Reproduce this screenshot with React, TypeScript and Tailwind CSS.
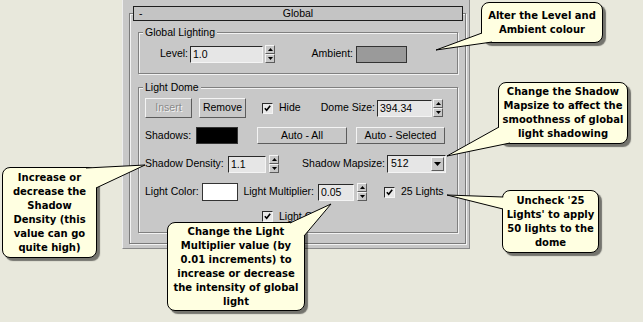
import React from "react"

const raised =
  "bg-[#c8c8c8] border border-t-[#f4f4f4] border-l-[#f4f4f4] border-b-[#5c5c5c] border-r-[#5c5c5c]"
const sunken =
  "border border-t-[#2a2a2a] border-l-[#2a2a2a] border-b-[#f4f4f4] border-r-[#f4f4f4]"

function Spinner() {
  return (
    <div className="flex flex-col w-[10px] h-[18px]">
      <div className={`flex-1 flex items-center justify-center ${raised}`}>
        <svg width="5" height="3" viewBox="0 0 5 3">
          <path d="M2.5 0L5 3H0z" fill="#000" />
        </svg>
      </div>
      <div className={`flex-1 flex items-center justify-center ${raised}`}>
        <svg width="5" height="3" viewBox="0 0 5 3">
          <path d="M0 0H5L2.5 3z" fill="#000" />
        </svg>
      </div>
    </div>
  )
}

function Field({ value, className }: { value: string; className: string }) {
  return (
    <div className={`h-[17px] bg-[#e6e6e6] ${sunken} pl-[2px] leading-[15px] ${className}`}>
      {value}
    </div>
  )
}

function Check() {
  return (
    <div className={`w-[11px] h-[11px] bg-[#e8e8e8] ${sunken} flex items-center justify-center`}>
      <svg width="7" height="7" viewBox="0 0 7 7">
        <path d="M0.8 3.2L2.7 5.3L6.2 0.8" fill="none" stroke="#000" strokeWidth="1.6" />
      </svg>
    </div>
  )
}

function Button({ label, className, disabled }: { label: string; className: string; disabled?: boolean }) {
  return (
    <div
      className={`${raised} flex items-center justify-center ${className} ${
        disabled ? "text-[#8a8a8a] [text-shadow:1px_1px_0_#f4f4f4]" : ""
      }`}
    >
      {label}
    </div>
  )
}

const bubble =
  "absolute flex items-center justify-center text-center rounded-[8px] border border-black bg-[#ffffe1] shadow-[3px_3px_1px_rgba(0,0,0,0.5)] font-['DejaVu_Sans',Verdana,sans-serif] font-bold text-[10px] leading-[14px] whitespace-nowrap"

// pointer wedges: base points sit on the bubble edge, tip on the control
const pointers = [
  { b1: [482, 33], tip: [436, 50], b2: [492, 42] },
  { b1: [499, 127], tip: [447, 156], b2: [510, 143] },
  { b1: [86, 168], tip: [145, 165], b2: [96, 188] },
  { b1: [503, 197], tip: [447, 195], b2: [503, 209] },
  { b1: [290, 223], tip: [331, 204], b2: [304, 236] },
]

export default function App() {
  return (
    <div className="relative w-[643px] h-[322px] overflow-hidden bg-[#e8e8dc] font-['Liberation_Sans',Arial,sans-serif] text-[10.5px] text-black">
      <div className="ml-[122px] w-[348px] h-[249px] bg-[#c8c8c8] border-l border-l-[#eeeeee] border-r border-r-[#8a8a8a] border-b border-b-[#8a8a8a] pt-[13px] pl-[6px]">
        <div className="w-[337px] h-[231px] border border-[#7a7a7a] shadow-[inset_1px_1px_0_#f2f2f2,1px_1px_0_#f2f2f2]">
          {/* rollout title */}
          <div className="-mt-[8px] ml-[3px] w-[330px] h-[15px] bg-[#c4c4c4] border border-[#1e1e1e] grid grid-cols-[24px_1fr_24px] items-center leading-[13px]">
            <span className="pl-[5px]">-</span>
            <span className="text-center">Global</span>
            <span />
          </div>

          {/* Global Lighting */}
          <div className="mt-[11px] ml-[8px] w-[320px] h-[42px] border border-[#808080] shadow-[inset_1px_1px_0_#f2f2f2,1px_1px_0_#f2f2f2]">
            <div className="-mt-[7px] ml-[4px] w-fit h-[13px] leading-[13px] px-[2px] bg-[#c8c8c8]">Global Lighting</div>
            <div className="mt-[6px] h-[18px] flex items-center">
              <span className="w-[49px] text-right">Level:</span>
              <Field value="1.0" className="ml-[2px] w-[73px]" />
              <div className="ml-[2px]">
                <Spinner />
              </div>
              <span className="w-[78px] text-right">Ambient:</span>
              <div className="ml-[3px] w-[51px] h-[17px] bg-[#9a9a9a] border border-[#333333]" />
            </div>
          </div>

          {/* Light Dome */}
          <div className="mt-[13px] ml-[8px] w-[320px] h-[146px] border border-[#808080] shadow-[inset_1px_1px_0_#f2f2f2,1px_1px_0_#f2f2f2] pl-[6px]">
            <div className="-mt-[7px] -ml-[2px] w-fit h-[13px] leading-[13px] px-[2px] bg-[#c8c8c8]">Light Dome</div>

            <div className="mt-[4px] h-[20px] flex items-center">
              <Button label="Insert" disabled className="w-[47px] h-[20px]" />
              <Button label="Remove" className="ml-[7px] w-[47px] h-[20px]" />
              <div className="ml-[16px]">
                <Check />
              </div>
              <span className="ml-[6px] w-[39px]">Hide</span>
              <span className="w-[57px] text-right whitespace-nowrap">Dome Size:</span>
              <Field value="394.34" className="ml-[2px] w-[55px]" />
              <div className="ml-[1px]">
                <Spinner />
              </div>
            </div>

            <div className="mt-[9px] h-[17px] flex items-center">
              <span className="w-[49px]">Shadows:</span>
              <div className="ml-[2px] w-[42px] h-[17px] bg-black border border-[#333333]" />
              <Button label="Auto - All" className="ml-[19px] w-[90px] h-[17px]" />
              <Button label="Auto - Selected" className="ml-[9px] w-[89px] h-[17px]" />
            </div>

            <div className="mt-[11px] h-[18px] flex items-center">
              <span className="w-[81px] whitespace-nowrap">Shadow Density:</span>
              <Field value="1.1" className="ml-[2px] w-[38px]" />
              <div className="ml-[3px]">
                <Spinner />
              </div>
              <span className="w-[108px] pr-[2px] text-right whitespace-nowrap">Shadow Mapsize:</span>
              <div className={`w-[59px] h-[18px] bg-[#e6e6e6] ${sunken} flex items-center`}>
                <span className="flex-1 pl-[3px]">512</span>
                <div className={`w-[13px] h-[14px] mr-[1px] flex items-center justify-center ${raised}`}>
                  <svg width="7" height="4" viewBox="0 0 7 4">
                    <path d="M0 0H7L3.5 4z" fill="#000" />
                  </svg>
                </div>
              </div>
            </div>

            <div className="mt-[10px] h-[18px] flex items-center">
              <span className="w-[57px] whitespace-nowrap">Light Color:</span>
              <div className="w-[36px] h-[18px] bg-white border border-[#333333]" />
              <span className="w-[80px] pr-[4px] text-right whitespace-nowrap">Light Multiplier:</span>
              <Field value="0.05" className="w-[36px]" />
              <div className="ml-[3px]">
                <Spinner />
              </div>
              <div className="ml-[17px]">
                <Check />
              </div>
              <span className="ml-[6px] whitespace-nowrap">25 Lights</span>
            </div>

            <div className="mt-[9px] h-[13px] flex items-center">
              <div className="ml-[117px]">
                <Check />
              </div>
              <span className="ml-[6px]">Light On</span>
            </div>
          </div>
        </div>
      </div>

      {/* callouts */}
      <div className={`${bubble} left-[481px] top-[2px] w-[122px] h-[41px]`}>
        <div>
          Alter the Level and
          <br />
          Ambient colour
        </div>
      </div>
      <div className={`${bubble} left-[498px] top-[82px] w-[130px] h-[62px]`}>
        <div>
          Change the Shadow
          <br />
          Mapsize to affect the
          <br />
          smoothness of global
          <br />
          light shadowing
        </div>
      </div>
      <div className={`${bubble} left-[2px] top-[167px] w-[95px] h-[91px]`}>
        <div>
          Increase or
          <br />
          decrease the
          <br />
          Shadow
          <br />
          Density (this
          <br />
          value can go
          <br />
          quite high)
        </div>
      </div>
      <div className={`${bubble} left-[502px] top-[190px] w-[97px] h-[63px]`}>
        <div>
          Uncheck '25
          <br />
          Lights' to apply
          <br />
          50 lights to the
          <br />
          dome
        </div>
      </div>
      <div className={`${bubble} left-[167px] top-[222px] w-[138px] h-[89px]`}>
        <div>
          Change the Light
          <br />
          Multiplier value (by
          <br />
          0.01 increments) to
          <br />
          increase or decrease
          <br />
          the intensity of global
          <br />
          light
        </div>
      </div>

      <svg className="absolute left-0 top-0 pointer-events-none" width="643" height="322" viewBox="0 0 643 322">
        {pointers.map((p, i) => (
          <g key={i}>
            <polygon points={`${p.b1.join(",")} ${p.tip.join(",")} ${p.b2.join(",")}`} fill="#ffffe1" />
            <polyline
              points={`${p.b1.join(",")} ${p.tip.join(",")} ${p.b2.join(",")}`}
              fill="none"
              stroke="#000"
              strokeWidth="1"
              strokeLinejoin="miter"
            />
          </g>
        ))}
      </svg>
    </div>
  )
}
